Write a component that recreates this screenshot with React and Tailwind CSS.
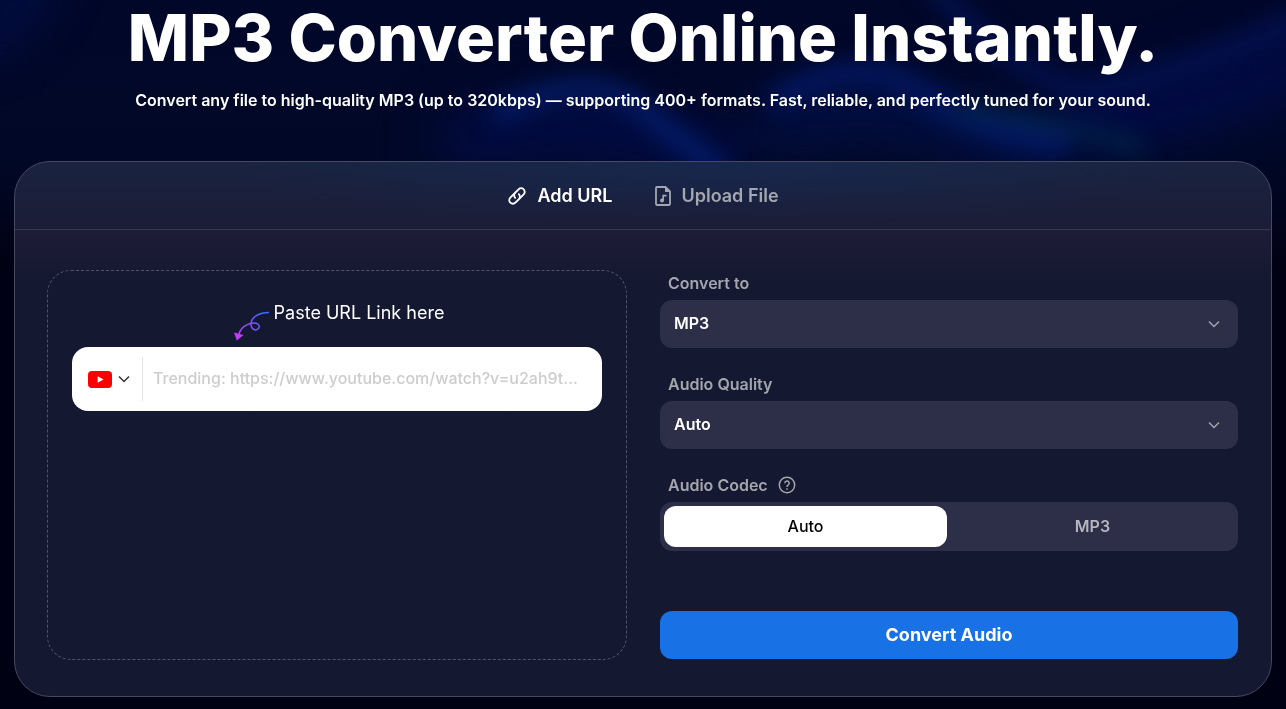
import { useState } from "react";

function Backdrop() {
  return (
    <svg
      className="absolute inset-x-0 top-0 h-[262px] w-full"
      viewBox="0 0 1286 262"
      preserveAspectRatio="none"
      aria-hidden="true"
    >
      <defs>
        <linearGradient id="sky" x1="0" y1="0" x2="0" y2="1">
          <stop offset="0" stopColor="#010729" />
          <stop offset="0.6" stopColor="#010827" />
          <stop offset="1" stopColor="#010114" />
        </linearGradient>
        <filter id="soft" x="-30%" y="-80%" width="160%" height="260%" colorInterpolationFilters="sRGB">
          <feGaussianBlur stdDeviation="11" />
        </filter>
        <filter id="mist" x="-30%" y="-80%" width="160%" height="260%" colorInterpolationFilters="sRGB">
          <feGaussianBlur stdDeviation="26" />
        </filter>
      </defs>
      <rect width="1286" height="262" fill="url(#sky)" />
      <g filter="url(#mist)" fill="none" strokeLinecap="round">
        <path d="M-30 40 Q10 30 40 -30" stroke="#04155c" strokeWidth="24" />
        <path d="M1080 120 Q1160 120 1300 60" stroke="#020c48" strokeWidth="60" />
        <path d="M460 140 Q600 110 720 160" stroke="#020c4c" strokeWidth="44" />
        <path d="M780 120 Q900 90 1030 150" stroke="#021048" strokeWidth="50" />
      </g>
      <g filter="url(#soft)" fill="none" strokeLinecap="round">
        <path d="M500 112 Q590 68 640 108 T720 170" stroke="#042074" strokeWidth="20" opacity="0.8" />
        <path d="M780 98 Q860 50 920 92 T1060 144" stroke="#041c70" strokeWidth="20" opacity="0.8" />
        <path d="M960 110 Q1040 118 1140 148" stroke="#032a4c" strokeWidth="14" opacity="0.8" />
        <path d="M930 -20 Q990 60 1080 92 Q1170 80 1300 20" stroke="#041154" strokeWidth="22" opacity="0.8" />
      </g>
    </svg>
  );
}

function LinkIcon() {
  return (
    <svg className="size-5" viewBox="0 0 24 24" fill="none" stroke="currentColor" strokeWidth="2.2" strokeLinecap="round" strokeLinejoin="round" aria-hidden="true">
      <path d="M9.800 14.200a4.300 4.300 0 0 1 0-6.100l4.100-4.100a4.300 4.300 0 0 1 6.100 6.100l-4.700 4.700" />
      <path d="M14.200 9.800a4.300 4.300 0 0 1 0 6.100l-4.100 4.100a4.300 4.300 0 0 1-6.100-6.100l4.700-4.700" />
    </svg>
  );
}

function MusicFileIcon() {
  return (
    <svg className="h-5 w-4" viewBox="0 0 16 20" fill="none" aria-hidden="true">
      <path d="M10.5 1H1.9a.9.9 0 0 0-.9.9v16.2c0 .5.4.9.9.9h12.2c.5 0 .9-.4.9-.9V5.500Z" stroke="currentColor" strokeWidth="1.8" strokeLinejoin="round" />
      <path d="M10 1v5h5Z" fill="currentColor" />
      <path d="M8.200 14.500V9.600h3.400" stroke="currentColor" strokeWidth="1.700" />
      <circle cx="7" cy="14.600" r="2" fill="currentColor" />
    </svg>
  );
}

function Chevron({ className }) {
  return (
    <svg className={className} viewBox="0 0 12 8" fill="none" stroke="currentColor" strokeWidth="1.5" aria-hidden="true">
      <path d="M1 1.500l5 5 5-5" />
    </svg>
  );
}

function CurlyArrow() {
  return (
    <svg className="h-[30px] w-9 shrink-0" viewBox="0 0 36 30" fill="none" aria-hidden="true">
      <defs>
        <linearGradient id="curl" x1="36" y1="1" x2="4" y2="26" gradientUnits="userSpaceOnUse">
          <stop offset="0" stopColor="#2b70ff" />
          <stop offset="1" stopColor="#c13bff" />
        </linearGradient>
      </defs>
      <path d="M35 1.500C25 1.500 17.500 6 17 12.500c-.3 4.500 2.500 7 5.500 6.300 3-.8 3.800-4.500 1-6C17.500 10.500 7 14.500 5 23" stroke="url(#curl)" strokeWidth="1.500" />
      <path d="M0 21.500l9.500 2.500L2.800 29.500Z" fill="#c13bff" />
    </svg>
  );
}

function YouTubeMark() {
  return (
    <svg className="h-[17px] w-6" viewBox="0 0 24 17" aria-hidden="true">
      <rect width="24" height="17" rx="4" fill="#f00" />
      <path d="M9.700 5.200v6.600l5.800-3.300Z" fill="#fff" />
    </svg>
  );
}

function HelpIcon() {
  return (
    <svg className="size-[18px]" viewBox="0 0 18 18" fill="none" stroke="currentColor" strokeWidth="1.500" aria-hidden="true">
      <circle cx="9" cy="9" r="7.700" />
      <path d="M6.800 7.200a2.200 2.200 0 1 1 3.300 1.900c-.7.400-1.100.8-1.100 1.600v.3" />
      <path d="M9 12.200v1.500" />
    </svg>
  );
}

function SelectField({ id, label, options }) {
  return (
    <div className="flex flex-col">
      <label htmlFor={id} className="px-2 text-base leading-[34px] font-semibold text-[#a4a5ad]">
        {label}
      </label>
      <div className="relative">
        <select id={id} className="h-12 w-full appearance-none rounded-xl bg-[#2d2f49] px-3.5 pb-0.5 text-base font-semibold text-white">
          {options.map((option) => (
            <option key={option}>{option}</option>
          ))}
        </select>
        <Chevron className="pointer-events-none absolute top-5 right-[18px] h-2 w-3 text-[#a2a3ad]" />
      </div>
    </div>
  );
}

export default function App() {
  const [tab, setTab] = useState("url");
  const [codec, setCodec] = useState("Auto");
  return (
    <div className="relative min-h-screen bg-[#010114] font-['Inter',sans-serif] text-white">
      <Backdrop />
      <main className="relative px-3.5 pb-3">
        <header className="text-center">
          <h1 className="text-[65px] leading-[76px] font-extrabold whitespace-nowrap">MP3 Converter Online Instantly.</h1>
          <p className="pt-3 text-base leading-6 font-semibold whitespace-nowrap">
            Convert any file to high-quality MP3 (up to 320kbps) — supporting 400+ formats. Fast, reliable, and perfectly tuned for your sound.
          </p>
        </header>

        <section className="mt-[49px] rounded-[36px] border border-[#464960] bg-linear-to-b from-[#192340] via-[#1c1b35] via-15% to-[#151831] to-22%">
          <div role="tablist" className="flex h-[68px] items-center justify-center gap-[43px] rounded-t-[35px] border-b border-[#363850] bg-[radial-gradient(ellipse_40%_90%_at_56%_0%,#152a5599,transparent)] text-lg">
            <button role="tab" aria-selected={tab === "url"} onClick={() => setTab("url")} className="flex items-center gap-2.5 font-semibold">
              <LinkIcon />
              Add URL
            </button>
            <button role="tab" aria-selected={tab === "file"} onClick={() => setTab("file")} className="flex items-center gap-2.5 font-semibold text-[#a4a6b0]">
              <MusicFileIcon />
              Upload File
            </button>
          </div>

          <div className="grid grid-cols-2 gap-8 px-8 pt-10 pb-9">
            <div className="rounded-3xl border border-dashed border-[#51536a] px-6 pt-7">
              <label htmlFor="link" className="flex h-12 items-start justify-center pl-1 text-lg leading-7">
                <span className="flex gap-1">
                  <span className="pt-3">
                    <CurlyArrow />
                  </span>
                  Paste URL Link here
                </span>
              </label>
              <div className="flex h-16 items-center rounded-2xl bg-white px-4">
                <button aria-label="Choose source" className="flex items-center gap-1.5 text-[#333]">
                  <YouTubeMark />
                  <Chevron className="h-2 w-3" />
                </button>
                <span className="ml-3 h-11 w-px bg-[#e3e3e3]" />
                <input
                  id="link"
                  type="url"
                  placeholder="Trending: https://www.youtube.com/watch?v=u2ah9t..."
                  className="ml-2.5 min-w-0 flex-1 pb-0.5 text-base font-medium text-ellipsis text-black outline-none placeholder:text-[#cdcdcd]"
                />
              </div>
            </div>

            <form className="flex flex-col px-px pb-px" onSubmit={(event) => event.preventDefault()}>
              <div className="-mt-1 flex flex-col gap-[19px]">
                <SelectField id="format" label="Convert to" options={["MP3"]} />
                <SelectField id="quality" label="Audio Quality" options={["Auto"]} />
                <fieldset>
                  <legend className="flex items-center gap-2.5 px-2 text-base leading-[34px] font-semibold text-[#a4a5ad]">
                    Audio Codec
                    <HelpIcon />
                  </legend>
                  <div className="flex h-[49px] gap-1 rounded-xl bg-[#2d2f49] p-1">
                    {["Auto", "MP3"].map((name) => (
                      <button
                        key={name}
                        type="button"
                        aria-pressed={codec === name}
                        onClick={() => setCodec(name)}
                        className={
                          codec === name
                            ? "flex-1 rounded-xl bg-white pb-0.5 text-base font-medium text-black"
                            : "flex-1 rounded-xl pb-0.5 text-base font-semibold text-[#b5b6be]"
                        }
                      >
                        {name}
                      </button>
                    ))}
                  </div>
                </fieldset>
              </div>
              <button type="submit" className="mt-[60px] h-12 rounded-xl bg-[#1871e5] text-lg font-bold">
                Convert Audio
              </button>
            </form>
          </div>
        </section>
      </main>
    </div>
  );
}
